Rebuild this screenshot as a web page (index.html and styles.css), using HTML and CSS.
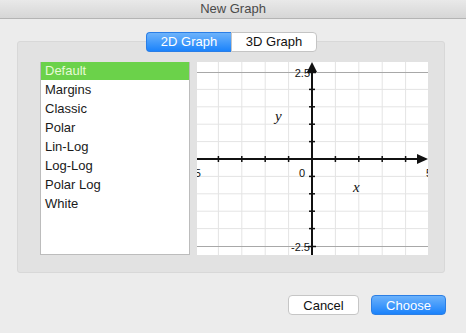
FILE: index.html
```html
<!DOCTYPE html>
<html lang="en">
<head>
    <meta charset="UTF-8">
    <title>New Graph</title>
    <link rel="stylesheet" href="styles.css">
</head>
<body>
    <div class="titlebar">New Graph</div>

    <div class="dialog">
        <div class="segments">
            <span class="segment active">2D Graph</span>
            <span class="segment">3D Graph</span>
        </div>

        <div class="group">
            <ul class="styles-list">
                <li class="selected">Default</li>
                <li>Margins</li>
                <li>Classic</li>
                <li>Polar</li>
                <li>Lin-Log</li>
                <li>Log-Log</li>
                <li>Polar Log</li>
                <li>White</li>
            </ul>

            <div class="preview">
                <svg width="231" height="193" viewBox="0 0 231 193">
                    <g stroke="#e4e4e4" stroke-width="1">
                        <line x1="21.4" y1="0" x2="21.4" y2="193"/>
                        <line x1="44.8" y1="0" x2="44.8" y2="193"/>
                        <line x1="68.2" y1="0" x2="68.2" y2="193"/>
                        <line x1="91.6" y1="0" x2="91.6" y2="193"/>
                        <line x1="138.4" y1="0" x2="138.4" y2="193"/>
                        <line x1="161.8" y1="0" x2="161.8" y2="193"/>
                        <line x1="185.2" y1="0" x2="185.2" y2="193"/>
                        <line x1="208.6" y1="0" x2="208.6" y2="193"/>
                        <line x1="0" y1="27.4" x2="231" y2="27.4"/>
                        <line x1="0" y1="44.8" x2="231" y2="44.8"/>
                        <line x1="0" y1="62.2" x2="231" y2="62.2"/>
                        <line x1="0" y1="79.6" x2="231" y2="79.6"/>
                        <line x1="0" y1="114.4" x2="231" y2="114.4"/>
                        <line x1="0" y1="131.8" x2="231" y2="131.8"/>
                        <line x1="0" y1="149.2" x2="231" y2="149.2"/>
                        <line x1="0" y1="166.6" x2="231" y2="166.6"/>
                    </g>
                    <g stroke="#a8a8a8" stroke-width="1">
                        <line x1="0" y1="10.5" x2="231" y2="10.5"/>
                        <line x1="0" y1="184.5" x2="231" y2="184.5"/>
                    </g>
                    <g stroke="#111" stroke-width="2">
                        <line x1="0" y1="97" x2="224" y2="97"/>
                        <line x1="115" y1="8" x2="115" y2="193"/>
                    </g>
                    <g stroke="#111" stroke-width="1.5">
                        <line x1="21.4" y1="94" x2="21.4" y2="100"/>
                        <line x1="44.8" y1="94" x2="44.8" y2="100"/>
                        <line x1="68.2" y1="94" x2="68.2" y2="100"/>
                        <line x1="91.6" y1="94" x2="91.6" y2="100"/>
                        <line x1="138.4" y1="94" x2="138.4" y2="100"/>
                        <line x1="161.8" y1="94" x2="161.8" y2="100"/>
                        <line x1="185.2" y1="94" x2="185.2" y2="100"/>
                        <line x1="208.6" y1="94" x2="208.6" y2="100"/>
                        <line x1="111" y1="10.5" x2="119" y2="10.5"/>
                        <line x1="112" y1="27.4" x2="118" y2="27.4"/>
                        <line x1="112" y1="44.8" x2="118" y2="44.8"/>
                        <line x1="112" y1="62.2" x2="118" y2="62.2"/>
                        <line x1="112" y1="79.6" x2="118" y2="79.6"/>
                        <line x1="112" y1="114.4" x2="118" y2="114.4"/>
                        <line x1="112" y1="131.8" x2="118" y2="131.8"/>
                        <line x1="112" y1="149.2" x2="118" y2="149.2"/>
                        <line x1="112" y1="166.6" x2="118" y2="166.6"/>
                        <line x1="111" y1="184.5" x2="119" y2="184.5"/>
                    </g>
                    <polygon points="115,0 110,10 120,10" fill="#111"/>
                    <polygon points="231,97 220,92 220,102" fill="#111"/>
                    <g class="ticklabel">
                        <text x="113" y="15" text-anchor="end">2.5</text>
                        <text x="113" y="189" text-anchor="end">-2.5</text>
                        <text x="108" y="115" text-anchor="end">0</text>
                        <text x="-1" y="115" text-anchor="middle">-5</text>
                        <text x="232" y="115" text-anchor="middle">5</text>
                    </g>
                    <text class="axislabel" x="78" y="59">y</text>
                    <text class="axislabel" x="156" y="130">x</text>
                </svg>
            </div>
        </div>

        <div class="actions">
            <button class="btn">Cancel</button>
            <button class="btn primary">Choose</button>
        </div>
    </div>
</body>
</html>
```

FILE: styles.css
```css
body {
    margin: 0;
    width: 466px;
    height: 333px;
    overflow: hidden;
    background-color: #ececec;
    font-family: "Liberation Sans", Arial, sans-serif;
    font-size: 13px;
    color: #1a1a1a;
}
.titlebar {
    height: 18px;
    line-height: 18px;
    text-align: center;
    color: #4a4a4a;
    background: linear-gradient(#e9e9e9, #d6d6d6);
    border-bottom: 1px solid #b4b4b4;
}
.dialog {
    padding: 13px 20px 0 17px;
}
.segments {
    display: flex;
    justify-content: center;
    position: relative;
    z-index: 1;
    height: 20px;
}
.segment {
    width: 84px;
    line-height: 18px;
    text-align: center;
    background: #fff;
    border: 1px solid #c4c4c4;
    color: #111;
}
.segment:first-child {
    border-radius: 4px 0 0 4px;
    border-right: none;
}
.segment:last-child {
    border-radius: 0 4px 4px 0;
}
.segment.active {
    background: linear-gradient(#6db3fb, #1b83fb);
    border-color: #2a7ee6;
    color: #fff;
}
.group {
    display: flex;
    gap: 7px;
    margin-top: -11px;
    width: 428px;
    height: 232px;
    box-sizing: border-box;
    padding: 20px 16px 18px 22px;
    background-color: #e2e2e2;
    border: 1px solid #d8d8d8;
    border-radius: 3px;
}
.styles-list {
    list-style: none;
    margin: 0;
    padding: 0;
    flex: none;
    width: 150px;
    height: 193px;
    box-sizing: border-box;
    background: #fff;
    border: 1px solid #bcbcbc;
    border-top: none;
}
.styles-list li {
    height: 19px;
    line-height: 19px;
    padding-left: 4px;
}
.styles-list li.selected {
    height: 18px;
    line-height: 18px;
    background-color: #6bd24a;
    color: #e6fad6;
}
.preview {
    flex: none;
    width: 231px;
    height: 193px;
    background: #fff;
}
.preview svg {
    display: block;
}
.ticklabel {
    font-family: "Liberation Sans", Arial, sans-serif;
    font-size: 11px;
    fill: #111;
}
.axislabel {
    font-family: "Liberation Serif", "Times New Roman", serif;
    font-style: italic;
    font-size: 15px;
    fill: #111;
}
.actions {
    display: flex;
    justify-content: flex-end;
    gap: 12px;
    margin-top: 22px;
}
.btn {
    font-family: "Liberation Sans", Arial, sans-serif;
    font-size: 13px;
    height: 20px;
    padding: 0;
    width: 71px;
    background: #fff;
    color: #111;
    border: 1px solid #c6c6c6;
    border-radius: 4px;
}
.btn.primary {
    width: 75px;
    background: linear-gradient(#6cb2fb, #1a82fb);
    border-color: #2c7fe4;
    color: #fff;
}
```
